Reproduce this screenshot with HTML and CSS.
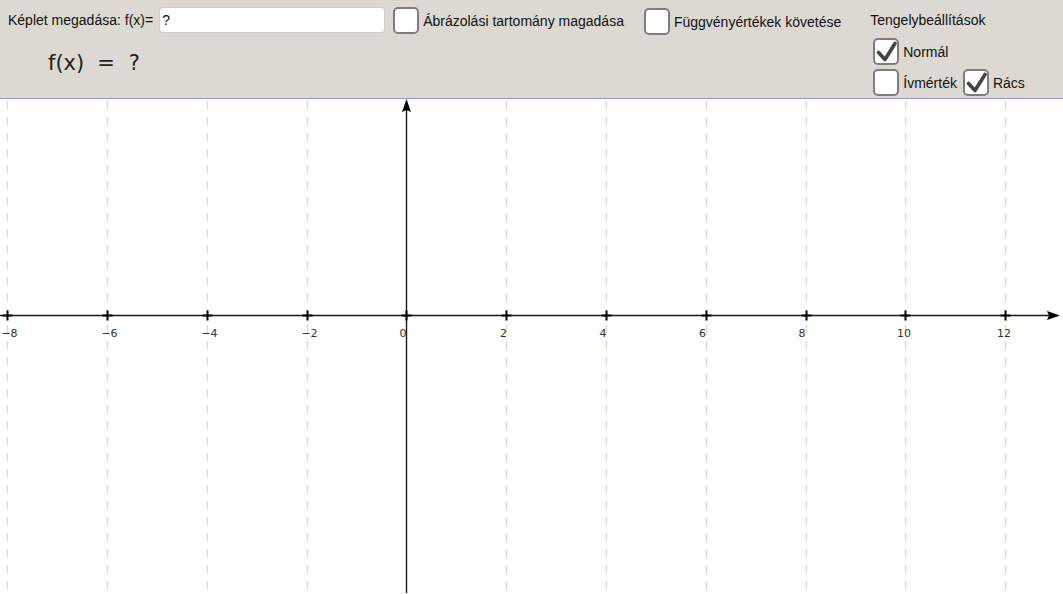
FILE: index.html
```html
<!DOCTYPE html>
<html lang="hu">
<head>
<meta charset="utf-8">
<title>Függvényábrázolás</title>
<link rel="stylesheet" href="styles.css">
</head>
<body>
<header class="toolbar">
  <div class="formula-col">
    <div class="formula-row">
      <span class="label">Képlet megadása: f(x)=</span>
      <div class="input">?</div>
    </div>
    <div class="fx"><span>f(x)</span><span class="eq">=</span><span>?</span></div>
  </div>
  <div class="check first"><span class="box"></span><span class="label">Ábrázolási tartomány magadása</span></div>
  <div class="check second"><span class="box"></span><span class="label">Függvényértékek követése</span></div>
  <div class="axis-col">
    <div class="axis-title">Tengelybeállítások</div>
    <div class="axis-row top">
      <div class="check"><span class="box checked"><svg viewBox="0 0 22 23"><path d="M3.5 12.5 L10 19.5 L20 3.5"/></svg></span><span class="label">Normál</span></div>
    </div>
    <div class="axis-row">
      <div class="check"><span class="box"></span><span class="label">Ívmérték</span></div>
      <div class="check racs"><span class="box checked"><svg viewBox="0 0 22 23"><path d="M3.5 12.5 L10 19.5 L20 3.5"/></svg></span><span class="label">Rács</span></div>
    </div>
  </div>
</header>
<main class="graph">
  <svg class="plot" width="1063" height="494" viewBox="0 0 1063 494">
    <g class="grid">
      <line x1="7.5" y1="0" x2="7.5" y2="494"/>
      <line x1="107.5" y1="0" x2="107.5" y2="494"/>
      <line x1="207.5" y1="0" x2="207.5" y2="494"/>
      <line x1="307.5" y1="0" x2="307.5" y2="494"/>
      <line x1="506.5" y1="0" x2="506.5" y2="494"/>
      <line x1="606.5" y1="0" x2="606.5" y2="494"/>
      <line x1="706.5" y1="0" x2="706.5" y2="494"/>
      <line x1="806.5" y1="0" x2="806.5" y2="494"/>
      <line x1="905.5" y1="0" x2="905.5" y2="494"/>
      <line x1="1005.5" y1="0" x2="1005.5" y2="494"/>
    </g>
    <g class="axes">
      <line x1="0" y1="216.5" x2="1050" y2="216.5"/>
      <line x1="406.5" y1="10" x2="406.5" y2="494"/>
    </g>
    <g class="arrows">
      <path d="M1060 216.5 L1047 212 L1049 216.5 L1047 221 Z"/>
      <path d="M406.5 0 L402 13 L406.5 11 L411 13 Z"/>
    </g>
    <g class="ticks">
      <path d="M7.5 211.5 V221.5 M2.5 216.5 H12.5"/>
      <path d="M107.5 211.5 V221.5 M102.5 216.5 H112.5"/>
      <path d="M207.5 211.5 V221.5 M202.5 216.5 H212.5"/>
      <path d="M307.5 211.5 V221.5 M302.5 216.5 H312.5"/>
      <path d="M406.5 211.5 V221.5 M401.5 216.5 H411.5"/>
      <path d="M506.5 211.5 V221.5 M501.5 216.5 H511.5"/>
      <path d="M606.5 211.5 V221.5 M601.5 216.5 H611.5"/>
      <path d="M706.5 211.5 V221.5 M701.5 216.5 H711.5"/>
      <path d="M806.5 211.5 V221.5 M801.5 216.5 H811.5"/>
      <path d="M905.5 211.5 V221.5 M900.5 216.5 H910.5"/>
      <path d="M1005.5 211.5 V221.5 M1000.5 216.5 H1010.5"/>
    </g>
    <g class="labels">
      <text x="9.5" y="238">−8</text>
      <text x="109.5" y="238">−6</text>
      <text x="209.5" y="238">−4</text>
      <text x="309.5" y="238">−2</text>
      <text x="403" y="238">0</text>
      <text x="503.5" y="238">2</text>
      <text x="603" y="238">4</text>
      <text x="702.5" y="238">6</text>
      <text x="802" y="238">8</text>
      <text x="904" y="238">10</text>
      <text x="1004" y="238">12</text>
    </g>
  </svg>
</main>
</body>
</html>
```

FILE: styles.css
```css
html, body {
  margin: 0;
  padding: 0;
  background: #ffffff;
  overflow: hidden;
}

.toolbar {
  display: flex;
  align-items: flex-start;
  height: 99px;
  box-sizing: border-box;
  padding-top: 7px;
  background: #dcd9d3;
  border-bottom: 1px solid #9898e4;
  font-family: "Liberation Sans", Arial, sans-serif;
  font-size: 14px;
  color: #111;
}

.formula-col {
  margin-left: 8px;
  display: flex;
  flex-direction: column;
}

.formula-row {
  display: flex;
  align-items: center;
  height: 26px;
}

.input {
  margin-left: 6px;
  width: 226px;
  height: 26px;
  box-sizing: border-box;
  padding: 4px 0 0 2px;
  background: #fff;
  border: 1px solid #cfcfcf;
  border-radius: 4px;
  font-size: 14px;
  line-height: 16px;
}

.fx {
  margin-top: 17px;
  margin-left: 40px;
  display: flex;
  align-items: center;
  font-family: "DejaVu Sans", sans-serif;
  font-size: 21px;
  color: #222;
  line-height: 26px;
}

.fx .eq {
  margin: 0 14px 0 13px;
}

.check {
  display: flex;
  align-items: center;
}

.check .label {
  margin-left: 4px;
  white-space: nowrap;
}

.check.first {
  margin-left: 8px;
}

.check.second {
  margin-left: 20px;
  margin-top: 1px;
}

.box {
  display: block;
  width: 26px;
  height: 27px;
  box-sizing: border-box;
  border: 2px solid #7d7d7d;
  border-radius: 5px;
  background: #fff;
  flex: none;
}

.box svg {
  display: block;
  width: 22px;
  height: 23px;
}

.box svg path {
  fill: none;
  stroke: #444;
  stroke-width: 3.6;
  stroke-linecap: round;
  stroke-linejoin: round;
}

.axis-col {
  margin-left: 29px;
  display: flex;
  flex-direction: column;
}

.axis-title {
  height: 26px;
  line-height: 26px;
}

.axis-row {
  display: flex;
  align-items: center;
  margin-left: 3px;
  margin-top: 4px;
}

.axis-row.top {
  margin-top: 5px;
}

.check.racs {
  margin-left: 6px;
}

.graph {
  display: block;
  height: 494px;
  background: #fff;
}

.plot {
  display: block;
}

.grid line {
  stroke: #d6d6d6;
  stroke-width: 1.2;
  stroke-dasharray: 8 8;
  stroke-dashoffset: -2;
}

.axes line {
  stroke: #1a1a1a;
  stroke-width: 1.4;
}

.arrows path {
  fill: #000;
}

.ticks path {
  stroke: #000;
  stroke-width: 2;
  fill: none;
}

.labels text {
  font-family: "DejaVu Sans", "Liberation Sans", sans-serif;
  font-size: 11px;
  fill: #333;
  text-anchor: middle;
}
```
